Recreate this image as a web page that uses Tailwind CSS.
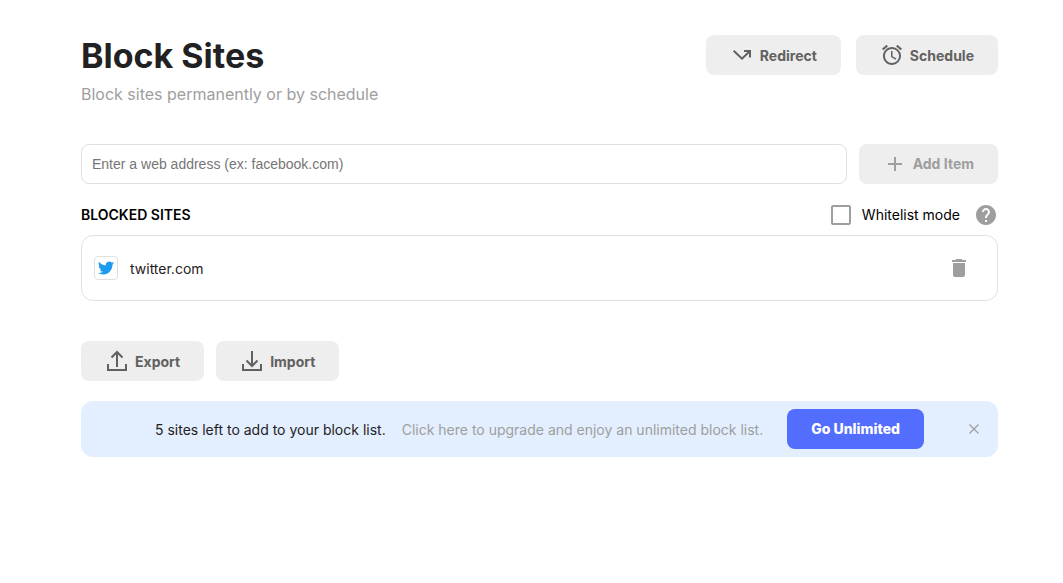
<!DOCTYPE html>
<html lang="en">
<head>
    <meta charset="UTF-8">
    <meta name="viewport" content="width=device-width, initial-scale=1.0">
    <title>Block Sites</title>
    <script src="https://cdn.jsdelivr.net/npm/@tailwindcss/browser@4"></script>
</head>
<body class="bg-white font-['Inter',sans-serif] text-sm text-black">
    <main class="pt-[35px] pl-[81px] pr-[65px]">
        <header class="flex items-start justify-between">
            <div>
                <h1 class="text-[34px] leading-[42px] font-bold text-[#1f2123]">Block Sites</h1>
                <p class="mt-[5px] text-base leading-6 text-[#9e9e9e]">Block sites permanently or by schedule</p>
            </div>
            <div class="flex gap-[15px]">
                <button type="button" class="flex h-10 items-center gap-1.5 rounded-lg bg-[#eeeeee] px-6 font-bold text-[#616161]">
                    <svg class="size-6" viewBox="0 0 24 24" fill="none" stroke="currentColor" stroke-width="2">
                        <path d="M3.700 7.700l8.300 8L20 8"/>
                        <path d="M14 8h6v6.500"/>
                    </svg>
                    <span class="pt-0.5">Redirect</span>
                </button>
                <button type="button" class="flex h-10 items-center gap-1.5 rounded-lg bg-[#eeeeee] px-6 font-bold text-[#616161]">
                    <svg class="size-6" viewBox="0 0 24 24" fill="currentColor">
                        <path d="M22 5.720l-4.600-3.860-1.290 1.530 4.600 3.860L22 5.720zM7.880 3.390L6.600 1.860 2 5.710l1.290 1.530 4.590-3.850zM12.500 8H11v6l4.750 2.850.75-1.230-4-2.370V8zM12 4c-4.970 0-9 4.030-9 9s4.020 9 9 9a9 9 0 0 0 0-18zm0 16c-3.870 0-7-3.130-7-7s3.130-7 7-7 7 3.130 7 7-3.130 7-7 7z"/>
                    </svg>
                    <span class="pt-0.5">Schedule</span>
                </button>
            </div>
        </header>

        <form class="mt-[38px] flex gap-3">
            <input type="text" aria-label="Web address" placeholder="Enter a web address (ex: facebook.com)" class="h-10 min-w-0 flex-1 rounded-lg border border-[#e0e0e0] px-2.5 font-['Liberation_Sans',sans-serif] text-sm placeholder:text-[#757575]">
            <button type="button" class="flex h-10 items-center gap-1.5 rounded-lg bg-[#eeeeee] px-6 font-bold text-[#9e9e9e]">
                <svg class="size-6" viewBox="0 0 24 24" fill="currentColor">
                    <path d="M19 13h-6v6h-2v-6H5v-2h6V5h2v6h6v2z"/>
                </svg>
                Add Item
            </button>
        </form>

        <section>
            <div class="mt-[19px] flex h-6 items-center justify-between">
                <h2 class="font-semibold">BLOCKED SITES</h2>
                <div class="flex items-center gap-3.5">
                    <label class="flex items-center gap-[11px]">
                        <input type="checkbox" class="size-5 appearance-none rounded-xs border-2 border-[#9e9e9e] checked:bg-[#9e9e9e]">
                        Whitelist mode
                    </label>
                    <button type="button" aria-label="Help" class="text-[#9e9e9e]">
                        <svg class="size-6" viewBox="0 0 24 24" fill="currentColor">
                            <path d="M12 2C6.480 2 2 6.480 2 12s4.480 10 10 10 10-4.480 10-10S17.520 2 12 2zm1 17h-2v-2h2v2zm2.070-7.750l-.9.920C13.450 12.900 13 13.500 13 15h-2v-.5c0-1.100.45-2.100 1.170-2.830l1.240-1.260c.37-.36.59-.86.59-1.410 0-1.100-.9-2-2-2s-2 .9-2 2H8c0-2.210 1.790-4 4-4s4 1.790 4 4c0 .88-.36 1.680-.93 2.250z"/>
                        </svg>
                    </button>
                </div>
            </div>

            <ul class="mt-2 rounded-xl border border-[#e0e0e0]">
                <li class="flex h-16 items-center pr-[26px] pl-3">
                    <span class="flex size-6 items-center justify-center rounded-sm border border-[#e0e0e0]">
                        <svg class="size-4" viewBox="0 0 24 24" fill="#1d9bf0">
                            <path d="M23.950 4.570a10 10 0 0 1-2.820.77 4.960 4.960 0 0 0 2.160-2.720c-.95.55-2 .95-3.130 1.180a4.920 4.920 0 0 0-8.380 4.480C7.690 8.090 4.070 6.130 1.640 3.160a4.820 4.820 0 0 0-.67 2.480c0 1.710.87 3.210 2.190 4.100a4.900 4.900 0 0 1-2.230-.62v.06a4.920 4.920 0 0 0 3.950 4.830 5 5 0 0 1-2.210.08 4.940 4.940 0 0 0 4.600 3.420A9.870 9.870 0 0 1 0 19.540a13.990 13.990 0 0 0 7.550 2.210c9.050 0 14-7.500 14-13.980 0-.21 0-.42-.02-.63a9.940 9.940 0 0 0 2.420-2.570z"/>
                        </svg>
                    </span>
                    <span class="ml-3 pt-0.5 text-[#1f2123]">twitter.com</span>
                    <button type="button" aria-label="Delete twitter.com" class="ml-auto text-[#9e9e9e]">
                        <svg class="size-6" viewBox="0 0 24 24" fill="currentColor">
                            <path d="M6 19c0 1.100.9 2 2 2h8c1.100 0 2-.9 2-2V7H6v12zM19 4h-3.500l-1-1h-5l-1 1H5v2h14V4z"/>
                        </svg>
                    </button>
                </li>
            </ul>
        </section>

        <div class="mt-10 flex gap-3">
            <button type="button" class="flex h-10 items-center gap-1.5 rounded-lg bg-[#eeeeee] px-6 font-bold text-[#616161]">
                <svg class="size-6" viewBox="0 0 24 24" fill="none" stroke="currentColor" stroke-width="2">
                    <path d="M12 18V3.500M6.500 8.500L12 3l5.500 5.500M3 15v6h18v-6"/>
                </svg>
                <span class="pt-0.5">Export</span>
            </button>
            <button type="button" class="flex h-10 items-center gap-1.5 rounded-lg bg-[#eeeeee] px-6 font-bold text-[#616161]">
                <svg class="size-6" viewBox="0 0 24 24" fill="none" stroke="currentColor" stroke-width="2">
                    <path d="M12 2v14.500M6.500 11.500L12 17l5.500-5.500M3 15v6h18v-6"/>
                </svg>
                <span class="pt-0.5">Import</span>
            </button>
        </div>

        <aside class="relative mt-5 flex h-14 items-center justify-center rounded-xl bg-[#e3effe]">
            <p class="pt-0.5 text-[#1f2123]">5 sites left to add to your block list.</p>
            <a href="#" class="ml-4 pt-0.5 text-[#9e9e9e]">Click here to upgrade and enjoy an unlimited block list.</a>
            <button type="button" class="ml-6 h-10 rounded-lg bg-[#536dfe] px-6 font-extrabold text-white">Go Unlimited</button>
            <button type="button" aria-label="Close" class="absolute right-4 text-[#9e9e9e]">
                <svg class="size-4" viewBox="0 0 16 16" fill="none" stroke="currentColor" stroke-width="1.200">
                    <path d="M3.500 3.500l9 9M12.500 3.500l-9 9"/>
                </svg>
            </button>
        </aside>
    </main>
</body>
</html>
